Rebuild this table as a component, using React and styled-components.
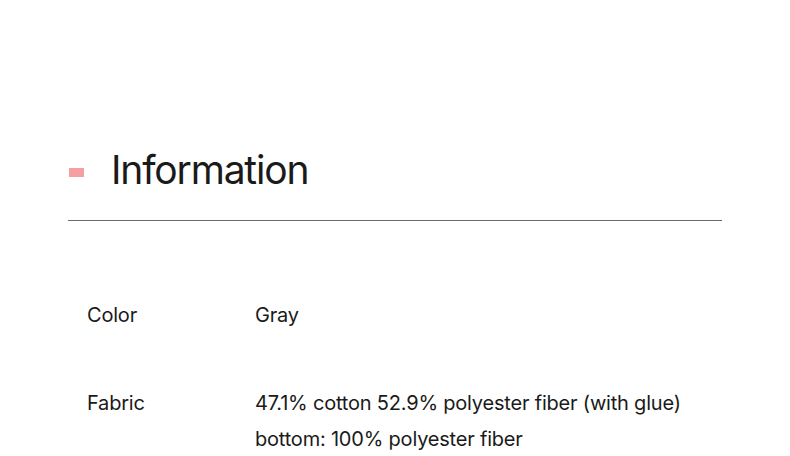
import React from 'react';
import styled, { createGlobalStyle } from 'styled-components';

const GlobalStyle = createGlobalStyle`
    body {
        margin: 0;
        background: #fff;
        font-family: Inter, "Liberation Sans", sans-serif;
        color: #1a1a1a;
    }
`;

const Section = styled.section`
    padding: 142px 68px 0 68px;
    width: 654px;
`;

const Header = styled.div`
    display: flex;
    align-items: center;
    gap: 27px;
    padding-bottom: 22px;
    border-bottom: 1.5px solid #6b6b6b;
`;

const Marker = styled.span`
    width: 15px;
    height: 9px;
    background: #f4a0a3;
    margin-left: 1px;
    margin-top: 4px;
`;

const Title = styled.h2`
    margin: 0;
    font-size: 39px;
    font-weight: 400;
    letter-spacing: -0.03em;
    line-height: 56px;
    color: #1a1a1a;
`;

const Table = styled.dl`
    margin: 0;
    padding: 76px 19px 0;
    display: grid;
    grid-template-columns: 168px 1fr;
    row-gap: 52px;
`;

const Label = styled.dt`
    font-size: 20px;
    line-height: 36px;
    letter-spacing: -0.01em;
`;

const Value = styled.dd`
    margin: 0;
    font-size: 20px;
    line-height: 36px;
    letter-spacing: -0.01em;
`;

const rows = [
    { label: 'Color', value: ['Gray'] },
    { label: 'Fabric', value: ['47.1% cotton 52.9% polyester fiber (with glue)', 'bottom: 100% polyester fiber'] },
];

export default function App() {
    return (
        <>
            <GlobalStyle />
            <Section>
                <Header>
                    <Marker />
                    <Title>Information</Title>
                </Header>
                <Table>
                    {rows.map(r => (
                        <React.Fragment key={r.label}>
                            <Label>{r.label}</Label>
                            <Value>
                                {r.value.map(v => <div key={v}>{v}</div>)}
                            </Value>
                        </React.Fragment>
                    ))}
                </Table>
            </Section>
        </>
    );
}
